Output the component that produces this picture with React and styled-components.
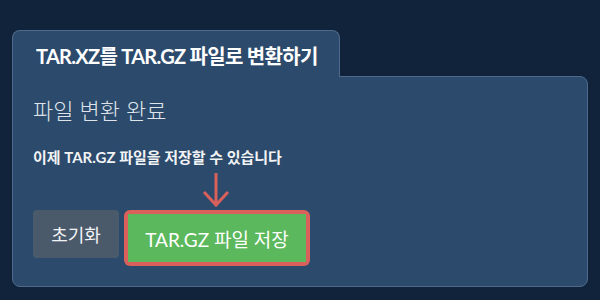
import React from 'react'
import styled, { createGlobalStyle } from 'styled-components'

const GlobalStyle = createGlobalStyle`
  html, body {
    margin: 0;
    padding: 0;
    background: #10233a;
  }
  body {
    font-family: Lato, "Noto Sans CJK KR", sans-serif;
  }
`

export default function App() {
  return (
    <>
      <GlobalStyle />
      <Page>
        <Card>
          <Tab>TAR.XZ를 TAR.GZ 파일로 변환하기</Tab>
          <Panel>
            <Heading>파일 변환 완료</Heading>
            <Message>이제 TAR.GZ 파일을 저장할 수 있습니다</Message>
            <ArrowRow>
              <svg width="30" height="36" viewBox="0 0 30 36">
                <path d="M15 1 V33 M3 20 L15 33 L27 20" fill="none" stroke="#d9605b" strokeWidth="3" />
              </svg>
            </ArrowRow>
            <Actions>
              <ResetButton>초기화</ResetButton>
              <Highlight>
                <SaveButton>TAR.GZ 파일 저장</SaveButton>
              </Highlight>
            </Actions>
          </Panel>
        </Card>
      </Page>
    </>
  )
}

const Page = styled.div`
  width: 600px;
  height: 300px;
  box-sizing: border-box;
  padding: 30px 12px 0 12px;
`

const Card = styled.div`
  display: flex;
  flex-direction: column;
  align-items: flex-start;
`

const Tab = styled.div`
  position: relative;
  z-index: 1;
  box-sizing: border-box;
  width: 328px;
  height: 47px;
  margin-bottom: -1px;
  padding: 3px 0 0 23px;
  display: flex;
  align-items: center;
  background: #2c4a6b;
  border: 1px solid #4d6a8c;
  border-bottom: none;
  border-radius: 8px 8px 0 0;
  color: #ffffff;
  font-size: 20px;
  font-weight: 700;
  letter-spacing: -0.7px;
  white-space: nowrap;
`

const Panel = styled.div`
  box-sizing: border-box;
  width: 576px;
  height: 211px;
  padding: 19px 21px 0 20px;
  background: #2c4a6b;
  border: 1px solid #4d6a8c;
  border-radius: 0 8px 8px 8px;
`

const Heading = styled.div`
  color: #dfe4ea;
  font-size: 22px;
  font-weight: 300;
  line-height: 30px;
`

const Message = styled.div`
  margin-top: 21px;
  color: #f1f3f5;
  font-size: 15px;
  font-weight: 700;
  line-height: 20px;
`

const ArrowRow = styled.div`
  display: flex;
  padding-left: 168px;
  height: 36px;
  margin-top: 5px;
`

const Actions = styled.div`
  display: flex;
  align-items: flex-start;
  gap: 5px;
  margin-top: 2px;
`

const ResetButton = styled.div`
  box-sizing: border-box;
  width: 86px;
  height: 48px;
  display: flex;
  align-items: center;
  justify-content: center;
  background: #4b5a6b;
  border-radius: 4px;
  color: #f1f3f5;
  font-size: 18px;
  font-weight: 400;
`

const Highlight = styled.div`
  padding: 4px;
  background: #d9605b;
  border-radius: 6px;
`

const SaveButton = styled.div`
  box-sizing: border-box;
  width: 178px;
  height: 48px;
  display: flex;
  align-items: center;
  justify-content: center;
  background: #5cb85c;
  color: #ffffff;
  font-size: 19px;
  font-weight: 400;
`
